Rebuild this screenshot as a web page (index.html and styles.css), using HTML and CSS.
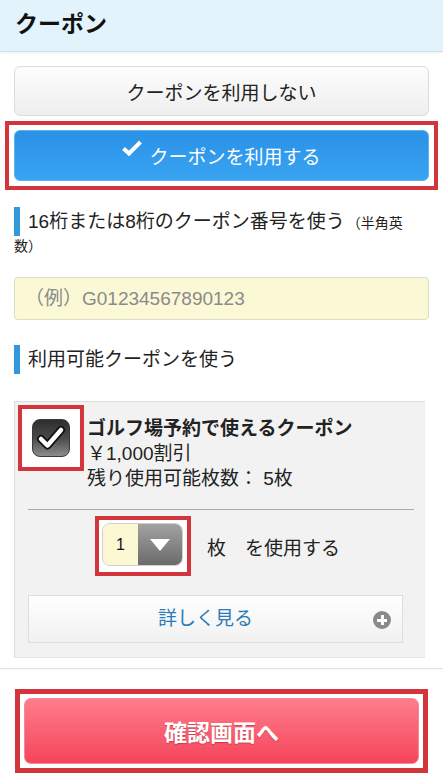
FILE: index.html
```html
<!DOCTYPE html>
<html lang="ja">
<head>
    <meta charset="UTF-8">
    <meta name="viewport" content="width=device-width, initial-scale=1.0">
    <title>クーポン</title>
    <link rel="stylesheet" href="styles.css">
</head>
<body>
    <header class="page-head">
        <h1>クーポン</h1>
    </header>

    <main class="coupon">
        <button class="btn btn-plain" type="button">クーポンを利用しない</button>

        <div class="mark mark-btn">
            <button class="btn btn-blue" type="button">
                <svg class="btn-check" width="20" height="17" viewBox="0 0 20 17"><path d="M1.5 8.5 L7 13.5 L18.5 2" fill="none" stroke="#fff" stroke-width="4"/></svg>
                <span>クーポンを利用する</span>
            </button>
        </div>

        <h2 class="sec-title">16桁または8桁のクーポン番号を使う<small>（半角英<br>数）</small></h2>
        <input class="code-input" type="text" placeholder="（例）G01234567890123">

        <h2 class="sec-title">利用可能クーポンを使う</h2>

        <div class="card">
            <div class="card-top">
                <div class="mark mark-check">
                    <span class="checkbox">
                        <svg width="38" height="38" viewBox="0 0 38 38">
                            <path d="M9 20 L15.5 26.5 L29 11" fill="none" stroke="#111" stroke-width="8" stroke-linejoin="round" stroke-linecap="round"/>
                            <path d="M9 20 L15.5 26.5 L29 11" fill="none" stroke="#fff" stroke-width="4.5" stroke-linejoin="round" stroke-linecap="round"/>
                        </svg>
                    </span>
                </div>
                <div class="card-text">
                    <p class="card-name">ゴルフ場予約で使えるクーポン</p>
                    <p>￥1,000割引</p>
                    <p>残り使用可能枚数： 5枚</p>
                </div>
            </div>

            <div class="card-line"></div>

            <div class="qty-row">
                <div class="mark mark-select">
                    <div class="select">
                        <span class="select-val">1</span>
                        <span class="select-arrow">
                            <svg width="20" height="12" viewBox="0 0 20 12"><path d="M0 0 H20 L10 12 Z" fill="#fff"/></svg>
                        </span>
                    </div>
                </div>
                <span class="qty-text">枚　を使用する</span>
            </div>

            <a class="more" href="#">詳しく見る<span class="plus"></span></a>
        </div>
    </main>

    <div class="divider"></div>

    <div class="foot">
        <div class="mark mark-submit">
            <button class="btn-submit" type="button">確認画面へ</button>
        </div>
    </div>
</body>
</html>
```

FILE: styles.css
```css
body {
    margin: 0;
    font-family: "Liberation Sans", "Noto Sans CJK JP", sans-serif;
    color: #222;
    background: #fff;
}

/* Header */
.page-head {
    height: 51px;
    padding: 0 15px;
    background: #e2f3fc;
    border-bottom: 1px solid #cfe2ec;
    box-shadow: 0 1px 2px rgba(0, 0, 0, 0.06);
}

.page-head h1 {
    margin: 0;
    font-size: 23px;
    line-height: 48px;
    font-weight: bold;
    color: #111;
}

.coupon {
    padding: 14px 14px 0;
}

/* red annotation frames */
.mark {
    border: 4px solid #d3353d;
    background: #fff;
}

/* Buttons */
.btn {
    display: flex;
    align-items: center;
    justify-content: center;
    width: 100%;
    box-sizing: border-box;
    font-family: inherit;
    font-size: 19px;
    border-radius: 6px;
    cursor: pointer;
}

.btn-plain {
    height: 50px;
    color: #222;
    background: linear-gradient(#fdfdfd, #eeeeee);
    border: 1px solid #dcdcdc;
}

.mark-btn {
    margin: 5px -9px 0;
    padding: 5px;
}

.btn-blue {
    height: 51px;
    color: #fff;
    background: linear-gradient(#2a91e7, #39a4f2);
    border: 1px solid #5eb3ef;
}

.btn-check {
    margin: -14px 7px 0 0;
}

/* Section titles */
.sec-title {
    margin: 21px 0 0;
    font-size: 19px;
    font-weight: normal;
    line-height: 22px;
    color: #222;
}

.sec-title::before {
    content: "";
    display: inline-block;
    width: 6px;
    height: 29px;
    margin: -5px 8px -4px 0;
    background: #3298dc;
    vertical-align: -3.5px;
}

.sec-title small {
    margin-left: 2px;
    font-size: 14px;
}

.code-input {
    display: block;
    width: 100%;
    height: 43px;
    box-sizing: border-box;
    margin-top: 20px;
    padding: 0 0 0 10px;
    font-family: inherit;
    font-size: 19px;
    color: #333;
    background: #fbf8d6;
    border: 1px solid #dedcc4;
    border-radius: 4px;
}

.code-input::placeholder {
    color: #8a8a8a;
}

.code-input + .sec-title {
    margin-top: 29px;
}

/* Coupon card */
.card {
    margin: 30px 4px 0 0;
    padding: 3px 0 14px;
    background: #f2f2f2;
    border: 1px solid #dddddd;
    border-right-color: #eeeeee;
    border-bottom-color: #e6e6e6;
}

.card-top {
    display: flex;
    align-items: flex-start;
    padding-left: 3px;
}

.mark-check {
    padding: 10px;
}

.checkbox {
    display: block;
    width: 38px;
    height: 38px;
    box-sizing: border-box;
    border: 1px solid #3a3a3a;
    border-radius: 8px;
    background: linear-gradient(#2e2e2e, #4a4a4a 50%, #8c8c8c);
    overflow: hidden;
}

.checkbox svg {
    display: block;
    margin: -1px;
}

.card-text {
    margin: 11px 0 0 3px;
}

.card-text p {
    margin: 0;
    font-size: 19px;
    line-height: 25px;
}

.card-text .card-name {
    font-weight: bold;
}

.card-line {
    margin: 18px 10px 0 13px;
    border-top: 1px solid #aaaaaa;
}

.qty-row {
    display: flex;
    align-items: center;
    justify-content: center;
    gap: 16px;
    margin-top: 6px;
    padding-right: 4px;
}

.mark-select {
    padding: 3px 4px 6px 3px;
}

.select {
    display: flex;
    width: 81px;
    height: 43px;
    box-sizing: border-box;
    border: 1px solid #cfcfcf;
    border-radius: 8px;
    overflow: hidden;
}

.select-val {
    width: 35px;
    background: #fbf8d3;
    font-size: 16px;
    line-height: 41px;
    text-align: center;
    color: #111;
}

.select-arrow {
    flex: 1;
    display: flex;
    align-items: center;
    justify-content: center;
    background: linear-gradient(#a2a2a2, #6b6b6b);
}

.qty-text {
    font-size: 19px;
    color: #222;
}

.more {
    position: relative;
    display: block;
    height: 48px;
    box-sizing: border-box;
    margin: 19px 21px 0 13px;
    padding-right: 20px;
    font-size: 19px;
    line-height: 46px;
    text-align: center;
    text-decoration: none;
    color: #2a7bb8;
    background: linear-gradient(#ffffff, #f1f1f1);
    border: 1px solid #dddddd;
}

.plus {
    position: absolute;
    right: 11px;
    top: 15px;
    width: 18px;
    height: 18px;
    border-radius: 50%;
    background: #8a8a8a;
}

.plus::before,
.plus::after {
    content: "";
    position: absolute;
    background: #fff;
    left: 4px;
    top: 7.5px;
    width: 10px;
    height: 3px;
}

.plus::after {
    left: 7.5px;
    top: 4px;
    width: 3px;
    height: 10px;
}

.divider {
    margin-top: 10px;
    border-top: 1px solid #e2e2e2;
    box-shadow: 0 1px 2px rgba(0, 0, 0, 0.04);
}

/* Submit */
.foot {
    padding: 20px 15px 0;
}

.mark-submit {
    border-width: 5px;
    padding: 4px;
}

.btn-submit {
    display: block;
    width: 100%;
    height: 66px;
    font-family: inherit;
    font-size: 23px;
    font-weight: bold;
    color: #fff;
    text-shadow: 0 1px 1px rgba(120, 0, 20, 0.35);
    background: linear-gradient(#fe7d8d, #f6445a);
    border: 1px solid #f38a98;
    border-radius: 7px;
    cursor: pointer;
}
```
